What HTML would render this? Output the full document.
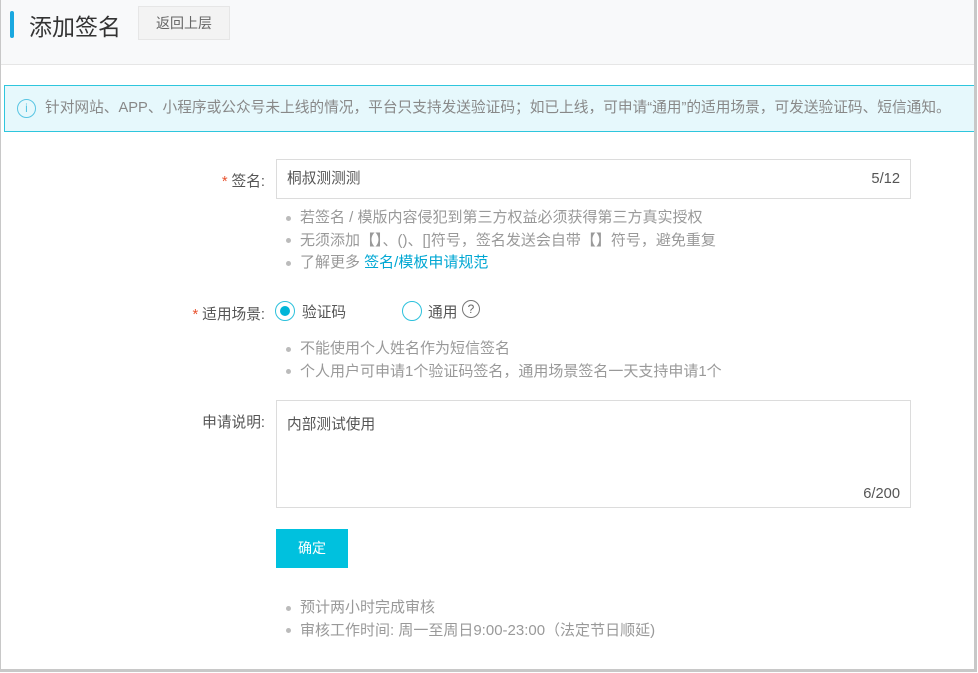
<!DOCTYPE html>
<html><head><meta charset="utf-8"><style>
*{margin:0;padding:0;box-sizing:border-box}
body{width:978px;height:673px;background:#fff;font-family:"Liberation Sans","Noto Sans CJK SC",sans-serif;position:relative;overflow:hidden;color:#333}
.frame{position:absolute;left:0;top:0;width:977px;height:672px;border-left:1px solid #c8c8c8;border-right:3px solid #c8c8c8;border-bottom:3px solid #c8c8c8}
.hdr{position:absolute;left:1px;top:0;width:973px;height:65px;background:#f8f9fa;border-bottom:1px solid #e6e6e6}
.bar{position:absolute;left:9px;top:11px;width:4px;height:27px;background:#1aa8e0;border-radius:2px}
.title{position:absolute;left:28px;top:8px;font-size:23px;color:#333}
.back{position:absolute;left:137px;top:6px;width:92px;height:34px;background:#f3f3f3;border:1px solid #e6e6e6;font-size:14px;color:#666;text-align:center;line-height:32px}
.alert{position:absolute;left:4px;top:85px;width:972px;height:47px;background:#e6f8fc;border:1px solid #2ec6dd;border-right:none;font-size:14.7px;color:#888;line-height:45px;padding-left:40px;white-space:nowrap}
.ic{position:absolute;left:12px;top:13px;width:19px;height:19px;border:1px solid #58c5e3;border-radius:50%;color:#58c5e3;font-size:12px;line-height:17px;text-align:center}
.lbl{position:absolute;font-size:14.7px;color:#555;text-align:right;width:120px}
.req{color:#e8522e;margin-right:4px}
.inp{position:absolute;left:276px;border:1px solid #dcdcdc;background:#fff;font-size:14.7px;color:#555}
.tips{position:absolute;left:286px;font-size:15px;color:#999;line-height:22.5px;white-space:nowrap}
.tips div:before{content:"";display:inline-block;width:5px;height:5px;background:#bbb;border-radius:50%;margin-right:9px;vertical-align:middle}
a{color:#00a7d3;text-decoration:none}
.radio{position:absolute;width:20px;height:20px;border:1px solid #2cc1dc;border-radius:50%}
.btn{position:absolute;left:276px;top:529px;width:72px;height:39px;background:#00c1de;color:#fff;font-size:14px;text-align:center;line-height:39px}
</style></head><body>
<div class="hdr"><div class="bar"></div><div class="title">添加签名</div><div class="back">返回上层</div></div>
<div class="alert"><div class="ic">i</div>针对网站、APP、小程序或公众号未上线的情况，平台只支持发送验证码；如已上线，可申请“通用”的适用场景，可发送验证码、短信通知。</div>

<div class="lbl" style="left:145px;top:170px"><span class="req">*</span>签名:</div>
<div class="inp" style="top:159px;width:635px;height:40px;line-height:38px;padding-left:10px">桐叔测测测<span style="position:absolute;right:10px;top:0">5/12</span></div>
<div class="tips" style="top:207px"><div>若签名 / 模版内容侵犯到第三方权益必须获得第三方真实授权</div><div>无须添加【】、()、[]符号，签名发送会自带【】符号，避免重复</div><div>了解更多 <a>签名/模板申请规范</a></div></div>

<div class="lbl" style="left:145px;top:303px"><span class="req">*</span>适用场景:</div>
<div class="radio" style="left:275px;top:301px"><div style="position:absolute;left:4px;top:4px;width:10px;height:10px;background:#00b5d8;border-radius:50%"></div></div>
<div style="position:absolute;left:302px;top:301px;font-size:14.7px;color:#555">验证码</div>
<div class="radio" style="left:402px;top:301px"></div>
<div style="position:absolute;left:428px;top:301px;font-size:14.7px;color:#555">通用</div>
<div style="position:absolute;left:462px;top:300px;width:18px;height:18px;border:1px solid #777;border-radius:50%;font-size:12px;color:#666;text-align:center;line-height:16px">?</div>
<div class="tips" style="top:338px"><div>不能使用个人姓名作为短信签名</div><div>个人用户可申请1个验证码签名，通用场景签名一天支持申请1个</div></div>

<div class="lbl" style="left:145px;top:411px">申请说明:</div>
<div class="inp" style="top:400px;width:635px;height:108px;padding:12px 10px">内部测试使用<span style="position:absolute;right:10px;bottom:5px">6/200</span></div>
<div class="btn">确定</div>
<div class="tips" style="top:597px"><div>预计两小时完成审核</div><div>审核工作时间: 周一至周日9:00-23:00（法定节日顺延)</div></div>
<div class="frame"></div>
</body></html>
